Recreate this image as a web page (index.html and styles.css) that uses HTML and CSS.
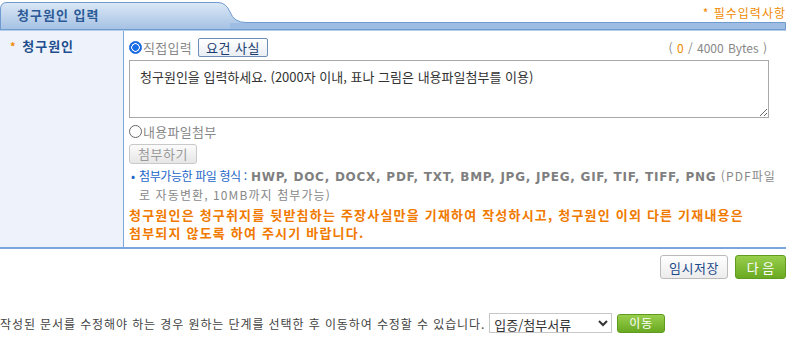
FILE: index.html
```html
<!DOCTYPE html>
<html lang="ko">
<head>
    <meta charset="UTF-8">
    <title>청구원인 입력</title>
    <link rel="stylesheet" href="styles.css">
</head>
<body>
<div class="wrap">

    <div class="tab-head">
        <svg class="tab-bg" width="786" height="31" viewBox="0 0 786 31">
            <defs>
                <linearGradient id="tabGrad" x1="0" y1="0" x2="0" y2="1">
                    <stop offset="0" stop-color="#dce8f6"/>
                    <stop offset="1" stop-color="#a3c0e3"/>
                </linearGradient>
            </defs>
            <path d="M0.5 30 L0.5 9 Q0.5 2.5 7 2.5 L218 2.5 Q226 2.5 230 12 Q234 22.5 246 22.5 L785.5 22.5 L785.5 29.5 L0.5 29.5 Z"
                  fill="url(#tabGrad)" stroke="#6f9bd0" stroke-width="1"/>
            <rect x="230" y="23" width="555" height="6" fill="#9dbde2"/>
            <line x1="0" y1="30" x2="786" y2="30" stroke="#6f9bd0" stroke-width="1"/>
        </svg>
        <h2 class="tab-title">청구원인 입력</h2>
        <span class="required">* 필수입력사항</span>
    </div>

    <div class="form-row">
        <div class="label-cell"><span class="star">*</span> 청구원인</div>
        <div class="field-cell">
            <div class="input-top">
                <div class="radio-line">
                    <span class="radio checked"></span>
                    <span class="radio-text">직접입력</span>
                    <button type="button" class="btn-blue">요건 사실</button>
                </div>
                <span class="bytes">( <em>0</em> / 4000 Bytes )</span>
            </div>
            <textarea class="claim-text">청구원인을 입력하세요. (2000자 이내, 표나 그림은 내용파일첨부를 이용)</textarea>
            <div class="radio-line second">
                <span class="radio"></span>
                <span class="radio-text">내용파일첨부</span>
            </div>
            <button type="button" class="btn-gray" disabled>첨부하기</button>
            <div class="file-note">
                <span class="bullet">•</span>
                <p><span class="blue">첨부가능한 파일 형식 :</span> <b>HWP, DOC, DOCX, PDF, TXT, BMP, JPG, JPEG, GIF, TIF, TIFF, PNG</b> (PDF파일<br>로 자동변환, 10MB까지 첨부가능)</p>
            </div>
            <p class="warn">청구원인은 청구취지를 뒷받침하는 주장사실만을 기재하여 작성하시고, 청구원인 이외 다른 기재내용은<br>첨부되지 않도록 하여 주시기 바랍니다.</p>
        </div>
    </div>

    <div class="actions">
        <button type="button" class="btn-white">임시저장</button>
        <button type="button" class="btn-green">다 음</button>
    </div>

    <div class="move-line">
        <span class="move-text">작성된 문서를 수정해야 하는 경우 원하는 단계를 선택한 후 이동하여 수정할 수 있습니다.</span>
        <select class="step-select">
            <option>입증/첨부서류</option>
        </select>
        <button type="button" class="btn-green small">이동</button>
    </div>

</div>
</body>
</html>
```

FILE: styles.css
```css
body { margin: 0; font-family: "Noto Sans CJK KR", "Noto Sans", sans-serif; font-size: 12px; color: #333; background: #fff; }
.wrap { width: 786px; }
button { font-family: inherit; cursor: pointer; }

/* header tab */
.tab-head { position: relative; height: 31px; display: flex; justify-content: space-between; align-items: flex-start; }
.tab-bg { position: absolute; left: 0; top: 0; }
.tab-title { position: relative; margin: 0; padding: 6px 0 0 17px; font-size: 13px; line-height: 17px; font-weight: bold; letter-spacing: 1px; color: #2b5a96; }
.required { position: relative; padding-top: 5px; font-size: 12px; line-height: 16px; letter-spacing: 1px; color: #f08a00; }

/* form row */
.form-row { display: flex; border-bottom: 2px solid #7aa6de; }
.label-cell { width: 124px; flex-shrink: 0; background: #eef3fb; border-right: 1px solid #7aa6de; padding: 6px 0 0 10px; box-sizing: border-box; font-size: 13px; font-weight: bold; letter-spacing: 1px; color: #1f4f8e; line-height: 18px; }
.label-cell .star { color: #f08a00; font-size: 11px; margin-right: 1px; }
.field-cell { flex: 1; padding: 6px 0 5px 5px; }

.input-top { width: 640px; display: flex; justify-content: space-between; align-items: center; }
.radio-line { display: flex; align-items: center; height: 20px; }
.radio-line.second { margin-top: 3px; }
.radio { width: 11px; height: 11px; border: 1px solid #666; border-radius: 50%; box-sizing: content-box; background: #fff; margin-right: 1px; }
.radio.checked { border: 1px solid #1665d8; background: radial-gradient(circle, #1a6ee6 0 3px, #fff 3.5px 4px, #1a6ee6 4.5px); }
.radio-text { font-size: 13px; color: #888; letter-spacing: 0.3px; }
.btn-blue { margin-left: 6px; height: 19px; padding: 0 7px; font-size: 13px; line-height: 17px; letter-spacing: 0.5px; color: #1b3e6e; background: linear-gradient(#fff, #e9eef5); border: 1px solid #6e8db3; border-radius: 2px; }
.bytes { font-size: 12px; color: #888; padding-right: 2px; word-spacing: 1px; }
.bytes em { font-style: normal; color: #f08a00; }

.claim-text { display: block; width: 640px; height: 58px; margin-top: 3px; padding: 6px 10px; box-sizing: border-box; border: 1px solid #a9a9a9; font-family: inherit; font-size: 13px; color: #333; resize: vertical; }

.btn-gray { display: block; margin-top: 3px; width: 68px; height: 20px; padding: 0; font-size: 13px; line-height: 18px; letter-spacing: 0.5px; color: #999; background: linear-gradient(#fbfbfb, #e6e6e6); border: 1px solid #c9c9c9; border-radius: 3px; }

.file-note { display: flex; margin-top: 3px; padding-left: 2px; color: #888; font-size: 12px; line-height: 18px; letter-spacing: 1.1px; }
.file-note .bullet { width: 8px; flex-shrink: 0; color: #1a66c8; }
.file-note p { margin: 0; white-space: nowrap; }
.file-note .blue { color: #1a66c8; letter-spacing: -0.4px; }
.file-note b { font-family: "DejaVu Sans", sans-serif; color: #7f7f7f; letter-spacing: 0.75px; }

.warn { margin: 2px 0 0; font-size: 13px; font-weight: bold; line-height: 18px; letter-spacing: 1.2px; color: #f07a00; }

/* buttons */
.actions { display: flex; justify-content: flex-end; gap: 7px; margin-top: 6px; }
.btn-white { height: 24px; width: 68px; padding: 0; font-size: 13px; letter-spacing: 0.5px; color: #1b4a8a; background: linear-gradient(#fff, #ececec); border: 1px solid #bbb; border-radius: 3px; }
.btn-green { height: 24px; width: 51px; padding: 0; font-size: 13px; color: #fff; background: linear-gradient(#98cf4c, #6aa922); border: 1px solid #5e9b1e; border-radius: 3px; }
.btn-green.small { width: 48px; height: 19px; font-size: 12px; line-height: 16px; letter-spacing: 1px; }

.move-line { display: flex; align-items: center; margin-top: 34px; font-size: 12px; color: #444; }
.move-text { letter-spacing: 0.9px; }
.step-select { margin-left: 4px; width: 123px; height: 20px; font-family: inherit; font-size: 13px; color: #333; border: 1px solid #c7c7c7; background: #fff; }
.move-line .btn-green { margin-left: 5px; }
```
